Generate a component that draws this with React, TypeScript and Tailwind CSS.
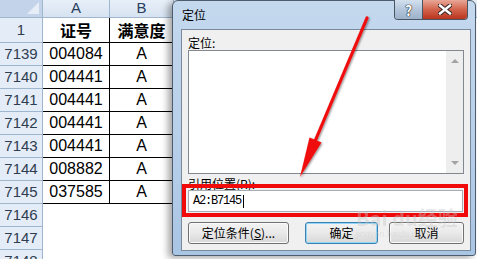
const data = [
  { n: '7139', id: '004084' },
  { n: '7140', id: '004441' },
  { n: '7141', id: '004441' },
  { n: '7142', id: '004441' },
  { n: '7143', id: '004441' },
  { n: '7144', id: '008882' },
  { n: '7145', id: '037585' },
];

const empty = ['7146', '7147', '7148'];

const sans = "font-['Liberation_Sans','Noto_Sans_CJK_SC',sans-serif]";
const cjk = "font-['Noto_Sans_CJK_SC','Liberation_Sans',sans-serif]";

function RowHead({ label, h }: { label: string; h: string }) {
  return (
    <div
      className={`${h} w-[43px] shrink-0 flex items-center justify-center bg-[#e4ecf7] border-r border-b border-[#9eb6ce] text-[15px] text-[#2f3d50]`}
    >
      {label}
    </div>
  );
}

function Button({ children, w, primary }: { children: React.ReactNode; w: string; primary?: boolean }) {
  return (
    <div
      className={`${w} h-[22px] rounded-[3px] border flex items-center justify-center text-[12px] text-black bg-gradient-to-b from-[#f3f3f3] via-[#e9e9e9] to-[#d7d7d7] ${
        primary
          ? 'border-[#3c7fb1] shadow-[inset_0_0_0_1px_#8fd7f7]'
          : 'border-[#707070] shadow-[inset_0_0_0_1px_#fbfbfb]'
      }`}
    >
      {children}
    </div>
  );
}

export default function App() {
  return (
    <div className={`relative w-[477px] h-[259px] overflow-hidden bg-white ${sans}`}>
      {/* Spreadsheet */}
      <div className="flex flex-col">
        <div className="flex h-[18px]">
          <div className="relative w-[43px] shrink-0 bg-[#c3d4ea] border-r border-b border-[#9eb6ce]">
            <div className="absolute right-[3px] bottom-[3px] w-0 h-0 border-l-[12px] border-l-transparent border-b-[12px] border-b-[#e6edf6]" />
          </div>
          <div className="w-[67px] shrink-0 flex items-center justify-center bg-gradient-to-b from-[#e8eff8] to-[#d7e3f2] border-r border-b border-[#9eb6ce] text-[15px] text-[#27405e]">
            A
          </div>
          <div className="w-[64px] shrink-0 flex items-center justify-center bg-gradient-to-b from-[#e8eff8] to-[#d7e3f2] border-r border-b border-[#9eb6ce] text-[15px] text-[#27405e]">
            B
          </div>
          <div className="flex-1 bg-gradient-to-b from-[#e8eff8] to-[#d7e3f2] border-b border-[#9eb6ce]" />
        </div>

        <div className="flex">
          <RowHead label="1" h="h-[25px]" />
          <div className={`w-[67px] h-[25px] shrink-0 flex items-center justify-center border-r border-b border-black text-[16px] font-bold ${cjk}`}>
            证号
          </div>
          <div className={`w-[64px] h-[25px] shrink-0 flex items-center justify-center border-r border-b border-black text-[16px] font-bold ${cjk}`}>
            满意度
          </div>
        </div>

        {data.map((r) => (
          <div key={r.n} className="flex">
            <RowHead label={r.n} h="h-[23px]" />
            <div className="w-[67px] h-[23px] shrink-0 flex items-center justify-center border-r border-b border-black text-[16px] text-black">
              {r.id}
            </div>
            <div className="w-[64px] h-[23px] shrink-0 flex items-center justify-center border-r border-b border-black text-[16px] text-black">
              A
            </div>
          </div>
        ))}

        {empty.map((n) => (
          <div key={n} className="flex">
            <RowHead label={n} h="h-[23px]" />
          </div>
        ))}
      </div>

      {/* Dialog window */}
      <div className={`absolute left-[172px] top-0 w-[304px] h-[256px] rounded-t-[6px] rounded-b-[3px] border border-[#4e5d6e] bg-gradient-to-b from-[#c4d8ee] via-[#b9d0ea] to-[#a9c5e4] shadow-[-4px_2px_7px_rgba(0,0,0,0.35)] flex flex-col pl-[8px] pr-[4px] pb-[4px] ${cjk}`}>
        <div className="relative h-[28px] shrink-0">
          <span className="absolute left-[1px] top-[6px] text-[12px] text-black leading-[16px]">定位</span>
          <div className="absolute right-[3px] top-[-1px] flex h-[20px] rounded-b-[4px] overflow-hidden border border-t-0 border-[#4a5563]">
            <div className="w-[28px] flex items-center justify-center bg-gradient-to-b from-[#d3e0ee] via-[#b3c6db] to-[#9cb2ca] border-r border-[#4a5563]">
              <span className="text-[14px] font-bold text-white leading-none [text-shadow:0_0_1px_#222,0_0_1px_#222,0_0_1px_#222]">
                ?
              </span>
            </div>
            <div className="w-[44px] flex items-center justify-center bg-gradient-to-b from-[#e8a797] via-[#d2634c] to-[#b9331c]">
              <svg width="14" height="11" viewBox="0 0 14 11">
                <path d="M2 1.5 L12 9.5 M12 1.5 L2 9.5" stroke="#3a2a28" strokeWidth="4.5" strokeLinecap="square" />
                <path d="M2 1.5 L12 9.5 M12 1.5 L2 9.5" stroke="#ffffff" strokeWidth="2.4" strokeLinecap="square" />
              </svg>
            </div>
          </div>
        </div>

        <div className="flex-1 bg-[#f0f0f0] border border-[#7b8a9a] flex flex-col pl-[6px] pr-[6px] pt-[6px]">
          <div className="h-[13px] text-[12px] leading-[13px] text-black">定位:</div>
          <div className="mt-[1px] h-[124px] w-[276px] bg-white border border-[#828790] flex justify-end">
            <div className="w-[17px] bg-[#eeeeee] flex flex-col justify-between items-center py-[8px]">
              <div className="w-0 h-0 border-l-[4px] border-r-[4px] border-b-[4px] border-l-transparent border-r-transparent border-b-[#a3a3a3]" />
              <div className="w-0 h-0 border-l-[4px] border-r-[4px] border-t-[4px] border-l-transparent border-r-transparent border-t-[#a3a3a3]" />
            </div>
          </div>
          <div className="mt-[3px] h-[13px] text-[12px] leading-[13px] text-black">
            引用位置(<span className="underline">R</span>):
          </div>
          <div className="h-[22px] w-[275px] bg-white border border-[#a5acb5] flex items-center pl-[4px] font-['Liberation_Mono',monospace] text-[12px] tracking-[-1.2px] text-black">
            A2:B7145
            <span className="ml-[2px] w-px h-[13px] bg-black" />
          </div>
          <div className="mt-[10px] flex">
            <Button w="w-[102px]">
              定位条件(<span className="underline">S</span>)...
            </Button>
            <div className="ml-[16px]">
              <Button w="w-[73px]" primary>
                确定
              </Button>
            </div>
            <div className="ml-[11px]">
              <Button w="w-[75px]">取消</Button>
            </div>
          </div>
        </div>
      </div>

      {/* Red highlight box */}
      <div className="absolute left-[182px] top-[184px] w-[286px] h-[33px] border-[4px] border-[#f00a0a] pointer-events-none" />

      {/* Watermark */}
      <div className="absolute left-[356px] top-[207px] flex flex-col items-start pointer-events-none opacity-40">
        <span className={`text-[20px] font-bold leading-[22px] text-[#c8c8c8] ${cjk}`}>Bai du经验</span>
        <span className="text-[9px] leading-[10px] text-[#cccccc]">jingyan.baidu.com</span>
      </div>

      {/* Arrow annotation */}
      <svg className="absolute left-0 top-0 pointer-events-none" width="477" height="259" viewBox="0 0 477 259">
        <defs>
          <filter id="sh" x="-20%" y="-20%" width="140%" height="140%">
            <feDropShadow dx="1" dy="1" stdDeviation="1.2" floodColor="#000" floodOpacity="0.45" />
          </filter>
        </defs>
        <g filter="url(#sh)">
          <line x1="367" y1="18" x2="313" y2="146" stroke="#f00c0c" strokeWidth="3.2" strokeLinecap="round" />
          <polygon points="300,177 321.5,142.6 309.5,137.6" fill="#f00c0c" />
        </g>
      </svg>
    </div>
  );
}
